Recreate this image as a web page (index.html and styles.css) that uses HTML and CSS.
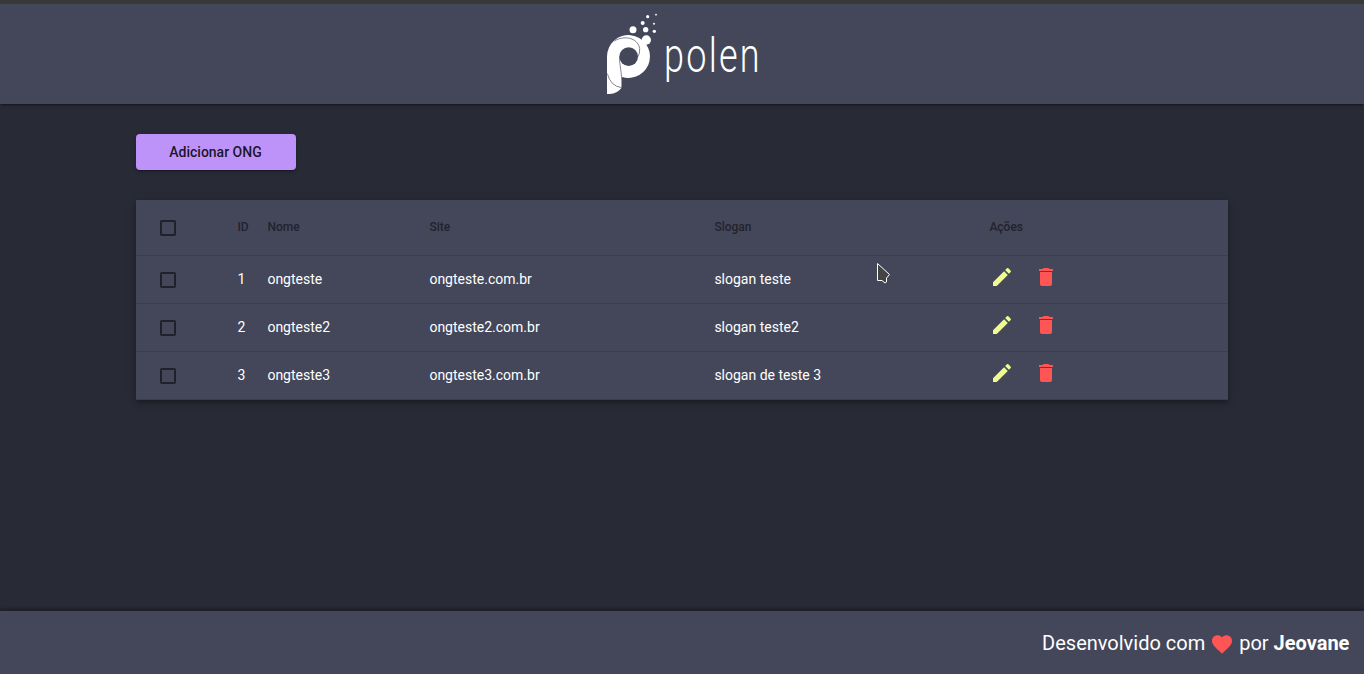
FILE: index.html
```html
<!DOCTYPE html>
<html lang="pt-BR">
<head>
<meta charset="utf-8">
<title>Polen</title>
<link rel="stylesheet" href="styles.css">
</head>
<body>
<svg class="defs" aria-hidden="true">
  <symbol id="edit" viewBox="0 0 24 24"><path d="M3 17.25V21h3.75L17.81 9.94l-3.75-3.75L3 17.25zM20.71 7.04c.39-.39.39-1.02 0-1.41l-2.34-2.34c-.39-.39-1.02-.39-1.41 0l-1.83 1.83 3.75 3.75 1.83-1.83z"/></symbol>
  <symbol id="trash" viewBox="0 0 24 24"><path d="M6 19c0 1.1.9 2 2 2h8c1.1 0 2-.9 2-2V7H6v12zM19 4h-3.500l-1-1h-5l-1 1H5v2h14V4z"/></symbol>
</svg>
<header class="header">
  <div class="logo">
    <svg class="logo-mark" viewBox="18 39 156 246">
      <g fill="#fff">
        <path d="M21 169A64.500 64.500 0 1 1 66 231V262Q52 282 29 282H21Z"/>
        <circle cx="139" cy="120" r="14"/>
        <circle cx="99" cy="89" r="10.500"/>
        <circle cx="137" cy="89" r="8"/>
        <circle cx="128" cy="69" r="6"/>
        <circle cx="143" cy="50" r="4.700"/>
        <circle cx="168" cy="44" r="2.700"/>
        <circle cx="162" cy="71" r="3"/>
        <circle cx="163" cy="94" r="5"/>
      </g>
      <circle cx="86" cy="170" r="28" fill="#44475a"/>
      <path class="logo-line" d="M43 123C70 106 112 111 119 145Q121 160 112 173M59 170C57 193 67 215 65 263M22 221Q32 259 65 263"/>
    </svg>
    <span class="logo-text">polen</span>
  </div>
</header>
<main class="main">
  <button class="add">Adicionar ONG</button>
  <div class="table">
    <div class="row head"><span class="box"></span><span>ID</span><span>Nome</span><span>Site</span><span>Slogan</span><span>Ações</span></div>
    <div class="row"><span class="box"></span><span>1</span><span>ongteste</span><span>ongteste.com.br</span><span>slogan teste</span><span class="actions"><svg class="edit"><use href="#edit"/></svg><svg class="trash"><use href="#trash"/></svg></span></div>
    <div class="row"><span class="box"></span><span>2</span><span>ongteste2</span><span>ongteste2.com.br</span><span>slogan teste2</span><span class="actions"><svg class="edit"><use href="#edit"/></svg><svg class="trash"><use href="#trash"/></svg></span></div>
    <div class="row"><span class="box"></span><span>3</span><span>ongteste3</span><span>ongteste3.com.br</span><span>slogan de teste 3</span><span class="actions"><svg class="edit"><use href="#edit"/></svg><svg class="trash"><use href="#trash"/></svg></span></div>
  </div>
</main>
<footer class="footer">
  <span>Desenvolvido com</span>
  <svg class="heart" viewBox="2 3 20 18.350"><path d="M12 21.350l-1.450-1.320C5.400 15.360 2 12.280 2 8.500 2 5.420 4.420 3 7.500 3c1.740 0 3.410.81 4.500 2.090C13.090 3.810 14.760 3 16.500 3 19.580 3 22 5.420 22 8.500c0 3.780-3.400 6.860-8.550 11.540L12 21.350z"/></svg>
  <span>por <b>Jeovane</b></span>
</footer>
<svg class="cursor" viewBox="0 0 14 22"><path d="M1.500 1.500V18.500H6L9 21 10.500 20V16L13.500 12.500Z"/></svg>
</body>
</html>
```
FILE: styles.css
```css
* { box-sizing: border-box; }
body {
  margin: 0;
  height: 674px;
  display: flex;
  flex-direction: column;
  overflow: hidden;
  background: #282a36;
  color: #fff;
  font: 14px/20px Roboto, sans-serif;
  border-top: 4px solid #383838;
}
.defs { position: absolute; width: 0; height: 0; }
.header {
  height: 100px;
  flex: none;
  background: #44475a;
  display: flex;
  justify-content: center;
  box-shadow: 0 3px 1px -2px rgba(0,0,0,.2), 0 2px 2px rgba(0,0,0,.14), 0 1px 5px rgba(0,0,0,.12);
}
.logo { width: 152px; padding-top: 9px; display: flex; }
.logo-mark { width: 52px; height: 82px; flex: none; }
.logo-line { fill: none; stroke: #44475a; stroke-width: 2; }
.logo-text {
  margin: 15px 0 0 6px;
  font-size: 48px;
  line-height: 56px;
  font-weight: 300;
  letter-spacing: 3px;
  transform: scaleX(.75);
  transform-origin: left;
}
.main { flex: 1; padding: 30px 136px 0; }
.add {
  display: block;
  width: 160px;
  height: 36px;
  padding: 0 1px 0 0;
  border: 0;
  border-radius: 4px;
  background: #bd93f9;
  color: rgba(0,0,0,.87);
  font: 500 14px/36px Roboto, sans-serif;
  box-shadow: 0 3px 1px -2px rgba(0,0,0,.2), 0 2px 2px rgba(0,0,0,.14), 0 1px 5px rgba(0,0,0,.12);
}
.table {
  margin-top: 30px;
  background: #44475a;
  box-shadow: 0 2px 4px -1px rgba(0,0,0,.2), 0 4px 5px rgba(0,0,0,.14), 0 1px 10px rgba(0,0,0,.12);
}
.row {
  height: 48px;
  padding: 0 0 2px 24px;
  display: grid;
  grid-template-columns: 77.400px 30px 162px 285px 275px 1fr;
  align-items: center;
  border-bottom: 1px solid #3c3c4d;
}
.head { height: 56px; font-size: 12px; font-weight: 500; color: #22232c; }
.box { width: 16px; height: 16px; margin-top: 3px; border: 2px solid #20212b; border-radius: 2px; }
.actions { display: flex; gap: 20px; height: 28px; padding-left: 1px; }
.actions svg { width: 24px; height: 24px; }
.edit { fill: #f1fa8c; }
.trash { fill: #f55; }
.footer {
  height: 63px;
  background: #44475a;
  display: flex;
  justify-content: flex-end;
  align-items: center;
  padding-right: 14.600px;
  font-size: 20px;
  box-shadow: 0 -3px 2px #20212b;
}
.heart { width: 20px; height: 19px; margin: 4px 7px 0; fill: #f55; }
.cursor { position: absolute; left: 876px; top: 262px; width: 14px; height: 22px; fill: #444; stroke: #fff; }
```
